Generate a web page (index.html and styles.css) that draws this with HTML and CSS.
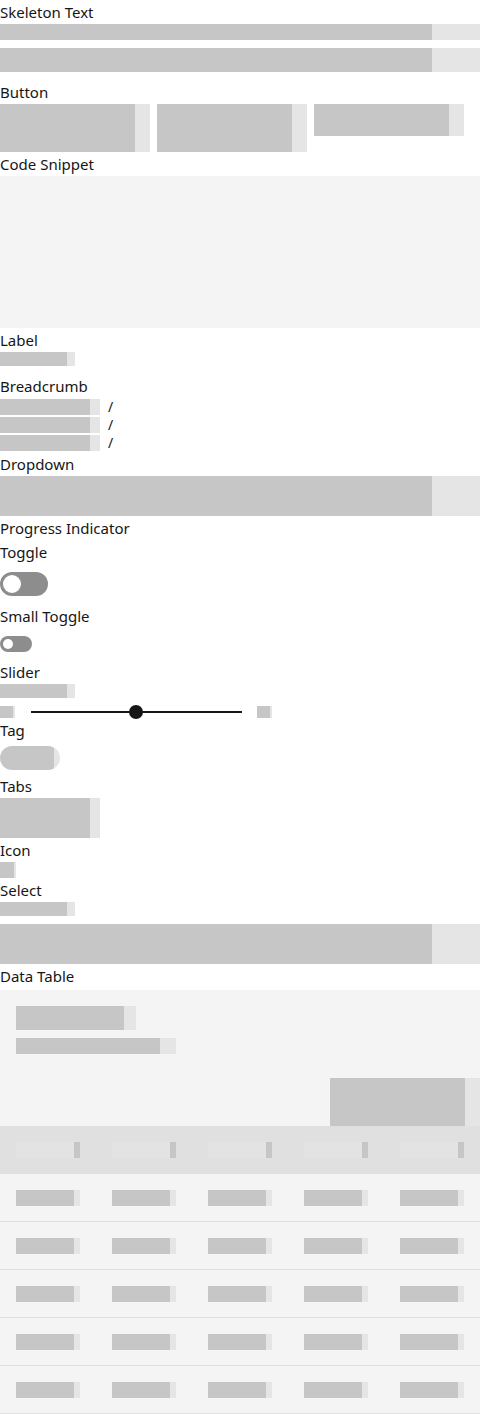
FILE: index.html
```html
<!DOCTYPE html>
<html lang="en">
<head>
<meta charset="utf-8">
<title>Skeleton states</title>
<link rel="stylesheet" href="styles.css">
</head>
<body>
<main class="page">
  <h2 class="heading">Skeleton Text</h2>
  <div class="sk sk-text"></div>
  <div class="sk sk-text-heading"></div>

  <h2 class="heading">Button</h2>
  <div class="btn-row">
    <div class="sk btn"></div>
    <div class="sk btn"></div>
    <div class="sk btn btn-sm"></div>
  </div>

  <h2 class="heading">Code Snippet</h2>
  <div class="code-snippet"></div>

  <h2 class="heading">Label</h2>
  <div class="sk sk-label"></div>

  <h2 class="heading">Breadcrumb</h2>
  <ol class="breadcrumb">
    <li class="crumb"><span class="sk crumb-link"></span><span class="crumb-sep">/</span></li>
    <li class="crumb"><span class="sk crumb-link"></span><span class="crumb-sep">/</span></li>
    <li class="crumb"><span class="sk crumb-link"></span><span class="crumb-sep">/</span></li>
  </ol>

  <h2 class="heading">Dropdown</h2>
  <div class="sk field"></div>

  <h2 class="heading">Progress Indicator</h2>

  <h2 class="heading">Toggle</h2>
  <div class="toggle-wrap"><span class="toggle"><span class="knob"></span></span></div>

  <h2 class="heading">Small Toggle</h2>
  <div class="toggle-wrap"><span class="toggle toggle-sm"><span class="knob"></span></span></div>

  <h2 class="heading">Slider</h2>
  <div class="sk sk-label slider-label"></div>
  <div class="slider-row">
    <span class="sk range-label"></span>
    <span class="slider"><span class="track"></span><span class="thumb"></span></span>
    <span class="sk range-label"></span>
  </div>

  <h2 class="heading">Tag</h2>
  <div class="sk tag"></div>

  <h2 class="heading">Tabs</h2>
  <div class="sk tabs"></div>

  <h2 class="heading">Icon</h2>
  <div class="sk icon"></div>

  <h2 class="heading">Select</h2>
  <div class="sk sk-label slider-label"></div>
  <div class="sk field"></div>

  <h2 class="heading">Data Table</h2>
  <section class="table">
    <div class="table-header">
      <div class="sk table-title"></div>
      <div class="sk table-desc"></div>
    </div>
    <div class="toolbar"><div class="sk toolbar-btn"></div></div>
    <div class="row thead">
      <span class="cell"><span class="bar bar-head"></span></span>
      <span class="cell"><span class="bar bar-head"></span></span>
      <span class="cell"><span class="bar bar-head"></span></span>
      <span class="cell"><span class="bar bar-head"></span></span>
      <span class="cell"><span class="bar bar-head"></span></span>
    </div>
    <div class="row tr">
      <span class="cell"><span class="bar sk"></span></span>
      <span class="cell"><span class="bar sk"></span></span>
      <span class="cell"><span class="bar sk"></span></span>
      <span class="cell"><span class="bar sk"></span></span>
      <span class="cell"><span class="bar sk"></span></span>
    </div>
    <div class="row tr">
      <span class="cell"><span class="bar sk"></span></span>
      <span class="cell"><span class="bar sk"></span></span>
      <span class="cell"><span class="bar sk"></span></span>
      <span class="cell"><span class="bar sk"></span></span>
      <span class="cell"><span class="bar sk"></span></span>
    </div>
    <div class="row tr">
      <span class="cell"><span class="bar sk"></span></span>
      <span class="cell"><span class="bar sk"></span></span>
      <span class="cell"><span class="bar sk"></span></span>
      <span class="cell"><span class="bar sk"></span></span>
      <span class="cell"><span class="bar sk"></span></span>
    </div>
    <div class="row tr">
      <span class="cell"><span class="bar sk"></span></span>
      <span class="cell"><span class="bar sk"></span></span>
      <span class="cell"><span class="bar sk"></span></span>
      <span class="cell"><span class="bar sk"></span></span>
      <span class="cell"><span class="bar sk"></span></span>
    </div>
    <div class="row tr">
      <span class="cell"><span class="bar sk"></span></span>
      <span class="cell"><span class="bar sk"></span></span>
      <span class="cell"><span class="bar sk"></span></span>
      <span class="cell"><span class="bar sk"></span></span>
      <span class="cell"><span class="bar sk"></span></span>
    </div>
  </section>
</main>
</body>
</html>
```

FILE: styles.css
```css
* { box-sizing: border-box; }

html, body {
  margin: 0;
  padding: 0;
  background: #ffffff;
}

body {
  font-family: "Noto Sans", "Open Sans", "Liberation Sans", sans-serif;
  font-size: 15px;
  color: #161616;
}

.page {
  width: 480px;
}

.heading {
  margin: 0;
  font-size: 15px;
  font-weight: 400;
  line-height: 24px;
  height: 24px;
  color: #161616;
}

.sk {
  display: block;
  background: linear-gradient(to right, #c6c6c6 90%, #e5e5e5 90%);
}

.sk-text {
  width: 100%;
  height: 16px;
  margin-bottom: 8px;
}

.sk-text-heading {
  width: 100%;
  height: 24px;
  margin-bottom: 8px;
}

.btn-row {
  display: flex;
  align-items: flex-start;
  gap: 7px;
}

.btn {
  width: 150px;
  height: 48px;
}

.btn-sm {
  height: 32px;
}

.code-snippet {
  height: 152px;
  background: #f4f4f4;
}

.sk-label {
  width: 75px;
  height: 14px;
  margin-bottom: 8px;
}

.breadcrumb {
  list-style: none;
  margin: 0;
  padding: 0;
}

.crumb {
  display: flex;
  align-items: center;
  height: 18px;
}

.crumb-link {
  width: 100px;
  height: 16px;
}

.crumb-sep {
  margin-left: 8px;
  font-size: 14px;
  line-height: 18px;
  color: #161616;
}

.field {
  width: 100%;
  height: 40px;
}

.toggle-wrap {
  padding: 8px 0;
}

.toggle {
  display: block;
  position: relative;
  width: 48px;
  height: 24px;
  border-radius: 12px;
  background: #8d8d8d;
}

.toggle .knob {
  position: absolute;
  left: 3px;
  top: 3px;
  width: 18px;
  height: 18px;
  border-radius: 50%;
  background: #ffffff;
}

.toggle-sm {
  width: 32px;
  height: 16px;
  border-radius: 8px;
}

.toggle-sm .knob {
  width: 10px;
  height: 10px;
}

.slider-row {
  display: flex;
  align-items: center;
  height: 12px;
}

.range-label {
  width: 15px;
  height: 12px;
  flex: none;
}

.slider {
  position: relative;
  display: block;
  width: 211px;
  height: 12px;
  margin: 0 15px 0 16px;
  flex: none;
}

.track {
  position: absolute;
  left: 0;
  right: 0;
  top: 5px;
  height: 2px;
  background: #161616;
}

.thumb {
  position: absolute;
  left: 98px;
  top: -1px;
  width: 14px;
  height: 14px;
  border-radius: 50%;
  background: #161616;
}

.tag {
  width: 60px;
  height: 24px;
  border-radius: 12px;
  margin: 4px 0;
}

.tabs {
  width: 100px;
  height: 40px;
}

.icon {
  width: 16px;
  height: 16px;
}

.table {
  margin-top: 2px;
  background: #f4f4f4;
}

.table-header {
  padding: 16px 0 0 16px;
}

.table-title {
  width: 120px;
  height: 24px;
  margin-bottom: 8px;
}

.table-desc {
  width: 160px;
  height: 16px;
}

.toolbar {
  display: flex;
  justify-content: flex-end;
  margin-top: 24px;
}

.toolbar-btn {
  width: 150px;
  height: 48px;
}

.row {
  display: grid;
  grid-template-columns: repeat(5, 1fr);
  align-items: start;
}

.thead {
  height: 48px;
  background: #e0e0e0;
}

.tr {
  height: 48px;
  border-bottom: 1px solid #e0e0e0;
}

.cell {
  display: block;
  padding: 16px 0 0 16px;
}

.bar {
  display: block;
  width: 64px;
  height: 16px;
}

.bar-head {
  background: linear-gradient(to right, #e3e3e3 90%, #c6c6c6 90%);
}
```
